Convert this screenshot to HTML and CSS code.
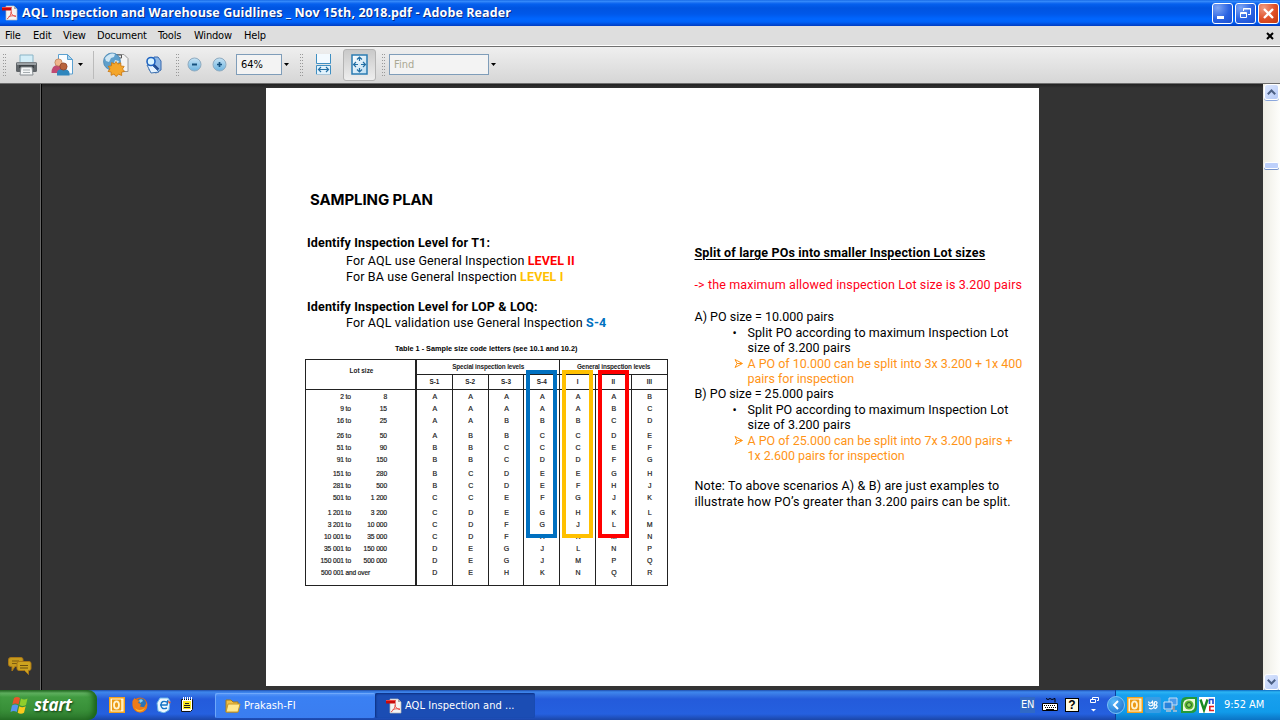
FILE: index.html
```html
<!DOCTYPE html>
<html lang="en">
<head>
<meta charset="utf-8">
<title>AQL Inspection and Warehouse Guidlines _ Nov 15th, 2018.pdf - Adobe Reader</title>
<link rel="stylesheet" href="styles.css">
</head>
<body>
<svg class="defs" width="0" height="0">
  <defs>
    <linearGradient id="blueBall" x1="0" y1="0" x2="0" y2="1"><stop offset="0" stop-color="#c5e2f4"/><stop offset="1" stop-color="#6db4e0"/></linearGradient>
    <linearGradient id="pageFill" x1="0" y1="0" x2="1" y2="1"><stop offset="0" stop-color="#fff"/><stop offset="1" stop-color="#b9dcf2"/></linearGradient>
    <symbol id="pdf" viewBox="0 0 16 16">
      <path d="M4 1h8l3 3v11H4z" fill="#f4f4f4" stroke="#b8b8b8" stroke-width=".7"/>
      <path d="M12 1v3h3z" fill="#aaa"/>
      <path d="M5 14c3-2 4.500-5 4.300-8.500M9 7c.5 2.500 2 4 5 4.600M6.500 11.800c2-1 4.500-1.300 7.500-.8" fill="none" stroke="#e8554e" stroke-width="1"/>
      <path d="M0 2h9.500v3.500H0z" fill="#c90a0a"/><path d="M0 2h9.500v1H0z" fill="#e44"/>
    </symbol>
    <symbol id="outlook" viewBox="0 0 16 16">
      <path d="M0 0h16v16H0z" fill="#f5a21b"/><path d="M1.500 1.500h13v13h-13z" fill="#fff6da"/>
      <path d="M3 2.500h9v11H3z" fill="#eb9a16"/><ellipse cx="7.500" cy="8" rx="2.500" ry="3.600" fill="none" stroke="#fff3cf" stroke-width="1.800"/>
      <path d="M12 3h1.500v10H12z" fill="#ffe19a"/>
    </symbol>
  </defs>
</svg>
<div class="desktop">
  <header class="titlebar">
    <svg class="title-icon" width="16" height="16"><use href="#pdf"/></svg>
    <span class="title">AQL Inspection and Warehouse Guidlines _ Nov 15th, 2018.pdf - Adobe Reader</span>
    <div class="win-buttons">
      <span class="win-btn"><svg width="19" height="19"><path d="M4 12h7v3H4z" fill="#fff"/></svg></span>
      <span class="win-btn"><svg width="19" height="19" fill="none" stroke="#fff"><path d="M7.500 7V4.500h7v6H12M7 5h8" /><path d="M4.500 8.500h6v5h-6zM4 9.500h7"/></svg></span>
      <span class="win-btn close"><svg width="19" height="19"><path d="M5 5l9 9M14 5l-9 9" stroke="#fff" stroke-width="2.300"/></svg></span>
    </div>
  </header>
  <nav class="menubar">
    <span>File</span><span>Edit</span><span>View</span><span>Document</span><span>Tools</span><span>Window</span><span>Help</span>
    <svg class="doc-close" width="8" height="8"><path d="M1 1l6 6M7 1L1 7" stroke="#000" stroke-width="2"/></svg>
  </nav>
  <div class="toolbar">
    <i class="grip"></i>
    <svg width="24" height="24" viewBox="0 0 24 24">
      <path d="M5 2h13v8H5z" fill="#d4eef8" stroke="#8ab4c6"/>
      <rect x="1" y="9" width="21" height="10" rx="1.500" fill="#5f6468"/><path d="M2 9.500h19v2.500H2z" fill="#9aa0a4"/><path d="M4 12h15v3H4z" fill="#3f4448"/>
      <path d="M6 14h11l1 8H5z" fill="#f4f6f7" stroke="#858b8f"/><path d="M8 17h7M8 19.500h7" stroke="#a6adb0"/>
    </svg>
    <svg width="24" height="24" viewBox="0 0 24 24">
      <path d="M7.500 1.500h9l5 5V21h-14z" fill="#f8fcff" stroke="#5aa0d0"/><path d="M16.500 1.500v5h5z" fill="#a9d2ee" stroke="#5aa0d0"/>
      <path d="M.5 20q0-8 6.500-8t6 8z" fill="#c04a72"/><circle cx="7.500" cy="9.500" r="3.600" fill="#f0b58c" stroke="#b67a4c" stroke-width=".7"/>
      <path d="M6 22.500V20q0-4 6-4t6.500 4v2.500z" fill="#2f86bd"/><circle cx="12.500" cy="13.500" r="3.600" fill="#b8643c" stroke="#8a3e22" stroke-width=".7"/>
    </svg>
    <i class="caret"></i>
    <i class="sep"></i>
    <svg width="26" height="25" viewBox="0 0 26 25">
      <path d="M12 2.500h9l4 4v13H12z" fill="#f3f3f3" stroke="#999"/><path d="M11.500 3h7v3h-7z" fill="#eee" stroke="#555"/>
      <circle cx="9" cy="9.500" r="8.500" fill="#5f9fcb" stroke="#4080ae" stroke-width=".7"/><path d="M2 6q5-6 10-4l-1 3-3 1-2 4-3-1zM12 8l4 1-2 4-3-2z" fill="#cfe6f4"/>
      <path d="M13 11l1.800 2.600 3-1.300.1 3.200 3.300.4-1.700 2.600 2.100 2.400-3.100.9.200 3.200-3-1.300L13 26l-1.900-2.500-3 1.300.1-3.200-3.200-.7 2-2.500-1.700-2.600 3.200-.5.100-3.200 2.800 1.200z" transform="translate(0 -1.500)" fill="#f4a62a" stroke="#c8740c" stroke-width=".8"/>
    </svg>
    <svg width="18" height="18" viewBox="0 0 18 18">
      <path d="M9 1h4l3 4v9l-5 3-7-3z" fill="#8db7e4" stroke="#3869ae"/><path d="M2 9l4 8 8-1-7-7z" fill="#e6f3ff" stroke="#3f72b0"/>
      <path d="M8.500 8.500l5 5" stroke="#214c91" stroke-width="2.300"/><circle cx="6" cy="5.500" r="4" fill="#d9f4ff" stroke="#1e62c0" stroke-width="1.600"/>
    </svg>
    <i class="grip"></i>
    <svg width="16" height="16"><circle cx="7.500" cy="7.500" r="6.500" fill="url(#blueBall)" stroke="#8fabc0"/><path d="M5 7.500h5" stroke="#17527f" stroke-width="2"/></svg>
    <svg width="16" height="16"><circle cx="7.500" cy="7.500" r="6.500" fill="url(#blueBall)" stroke="#8fabc0"/><path d="M5 7.500h5M7.500 5v5" stroke="#17527f" stroke-width="1.700"/></svg>
    <span class="field zoom">64%</span>
    <i class="caret"></i>
    <i class="grip"></i>
    <svg width="18" height="22"><path d="M1.500 0v9.500h14V0" fill="#f3faff" stroke="#3f8fc2"/><path d="M1.500 20.500v-9h14v9z" fill="#e1f2fc" stroke="#3f8fc2"/><path d="M1 20.500h15" stroke="#a9c5d8"/><path d="M4 15.500h9M6 13l-2.500 2.500L6 18M11 13l2.500 2.500L11 18" fill="none" stroke="#236fa4" stroke-width="1.200"/></svg>
    <span class="pressed"><svg width="17" height="21"><path d="M1 1h15v19H1z" fill="url(#pageFill)" stroke="#2b7cb3" stroke-width="1.500"/><path d="M8.500 3v4M6 5.500L8.500 3 11 5.500M8.500 18v-4M6 15.500L8.500 18 11 15.500M2.500 10.500H7M5 8l-2.500 2.500L5 13M14.500 10.500H10M12 8l2.500 2.500L12 13" fill="none" stroke="#236fa4" stroke-width="1.200"/></svg></span>
    <i class="grip"></i>
    <span class="field find">Find</span>
    <i class="caret"></i>
  </div>

  <main class="workspace">
    <aside class="sidebar">
      <svg width="24" height="18" viewBox="0 0 24 18"><path d="M3 .5h10q2 0 2 2v5q0 2-2 2H7L4 14V9.500H3q-2.500 0-2.500-2v-5q0-2 2.500-2z" fill="#c69a1d" stroke="#a87616"/><path d="M4 4h7M4 6.500h5" stroke="#7d5d10"/><path d="M11 4.500h10q2 0 2 2v5q0 2-2 2h-.5V17.500l-4-4H11q-2 0-2-2v-5q0-2 2-2z" fill="#cda31f" stroke="#a87616"/><path d="M12 8.500h8M12 11h8" stroke="#6b5010"/></svg>
    </aside>
    <div class="canvas">
      <article class="page">
        <section class="left">
          <h1>SAMPLING PLAN</h1>
          <h2 class="t1">Identify Inspection Level for T1:</h2>
          <p class="l1">For AQL use General Inspection <b class="red">LEVEL II</b></p>
          <p>For BA use General Inspection <b class="yellow">LEVEL I</b></p>
          <h2 class="lop">Identify Inspection Level for LOP &amp; LOQ:</h2>
          <p>For AQL validation use General Inspection <b class="blue">S-4</b></p>
          <div class="caption">Table 1 - Sample size code letters (see 10.1 and 10.2)</div>
          <div class="table">
            <div class="thead">
              <div class="lot-h">Lot size</div>
              <div class="special">Special inspection levels</div>
              <div class="general">General inspection levels</div>
              <div>S-1</div><div>S-2</div><div>S-3</div><div>S-4</div><div>I</div><div>II</div><div>III</div>
            </div>
            <div class="tbody">
              <div class="rules"><i></i><i></i><i></i><i></i><i></i><i></i><i></i><i></i></div>
              <div class="group">
                <div class="row"><span>2 to</span><span>8</span><b>A</b><b>A</b><b>A</b><b>A</b><b>A</b><b>A</b><b>B</b></div>
                <div class="row"><span>9 to</span><span>15</span><b>A</b><b>A</b><b>A</b><b>A</b><b>A</b><b>B</b><b>C</b></div>
                <div class="row"><span>16 to</span><span>25</span><b>A</b><b>A</b><b>B</b><b>B</b><b>B</b><b>C</b><b>D</b></div>
              </div>
              <div class="group">
                <div class="row"><span>26 to</span><span>50</span><b>A</b><b>B</b><b>B</b><b>C</b><b>C</b><b>D</b><b>E</b></div>
                <div class="row"><span>51 to</span><span>90</span><b>B</b><b>B</b><b>C</b><b>C</b><b>C</b><b>E</b><b>F</b></div>
                <div class="row"><span>91 to</span><span>150</span><b>B</b><b>B</b><b>C</b><b>D</b><b>D</b><b>F</b><b>G</b></div>
              </div>
              <div class="group">
                <div class="row"><span>151 to</span><span>280</span><b>B</b><b>C</b><b>D</b><b>E</b><b>E</b><b>G</b><b>H</b></div>
                <div class="row"><span>281 to</span><span>500</span><b>B</b><b>C</b><b>D</b><b>E</b><b>F</b><b>H</b><b>J</b></div>
                <div class="row"><span>501 to</span><span>1 200</span><b>C</b><b>C</b><b>E</b><b>F</b><b>G</b><b>J</b><b>K</b></div>
              </div>
              <div class="group">
                <div class="row"><span>1 201 to</span><span>3 200</span><b>C</b><b>D</b><b>E</b><b>G</b><b>H</b><b>K</b><b>L</b></div>
                <div class="row"><span>3 201 to</span><span>10 000</span><b>C</b><b>D</b><b>F</b><b>G</b><b>J</b><b>L</b><b>M</b></div>
                <div class="row"><span>10 001 to</span><span>35 000</span><b>C</b><b>D</b><b>F</b><b>H</b><b>K</b><b>M</b><b>N</b></div>
                <div class="row"><span>35 001 to</span><span>150 000</span><b>D</b><b>E</b><b>G</b><b>J</b><b>L</b><b>N</b><b>P</b></div>
                <div class="row"><span>150 001 to</span><span>500 000</span><b>D</b><b>E</b><b>G</b><b>J</b><b>M</b><b>P</b><b>Q</b></div>
                <div class="row over"><span>500 001 and over</span><b>D</b><b>E</b><b>H</b><b>K</b><b>N</b><b>Q</b><b>R</b></div>
              </div>
            </div>
            <i class="mark mark-blue"></i><i class="mark mark-yellow"></i><i class="mark mark-red"></i>
          </div>
        </section>
        <section class="right">
          <h2>Split of large POs into smaller Inspection Lot sizes</h2>
          <p class="max">-&gt; the maximum allowed inspection Lot size is 3.200 pairs</p>
          <p class="case">A) PO size = 10.000 pairs</p>
          <p class="item"><i>•</i>Split PO according to maximum Inspection Lot<br>size of 3.200 pairs</p>
          <p class="item orange"><i><svg width="9" height="9"><path d="M1 .5l7.500 4-7.500 4 2-4zM3 4.500h5" fill="none" stroke="#ff9417"/></svg></i>A PO of 10.000 can be split into 3x 3.200 + 1x 400<br>pairs for inspection</p>
          <p>B) PO size = 25.000 pairs</p>
          <p class="item"><i>•</i>Split PO according to maximum Inspection Lot<br>size of 3.200 pairs</p>
          <p class="item orange"><i><svg width="9" height="9"><path d="M1 .5l7.500 4-7.500 4 2-4zM3 4.500h5" fill="none" stroke="#ff9417"/></svg></i>A PO of 25.000 can be split into 7x 3.200 pairs +<br>1x 2.600 pairs for inspection</p>
          <p class="note">Note: To above scenarios A) &amp; B) are just examples to<br>illustrate how PO’s greater than 3.200 pairs can be split.</p>
        </section>
      </article>
    </div>
    <div class="scrollbar">
      <span class="sb-btn"><svg width="9" height="6"><path d="M.8 5.200L4.500 1.500l3.700 3.700" fill="none" stroke="#4d6185" stroke-width="2"/></svg></span>
      <span class="thumb"></span>
      <span class="sb-btn"><svg width="9" height="6"><path d="M.8.8l3.700 3.700L8.200.8" fill="none" stroke="#4d6185" stroke-width="2"/></svg></span>
    </div>
  </main>

  <footer class="taskbar">
    <div class="start">
      <svg width="20" height="18" viewBox="0 0 20 18"><path d="M4 2q3-2 6 0L8.500 8.500q-3-2-6.200 0z" fill="#e8552b"/><path d="M11 2.500q3 2 6.500 0L16 9q-3.500 2-6.500 0z" fill="#8fce2c"/><path d="M2 9.500q3-2 6.200 0L6.700 16q-3-2-6.200 0z" fill="#5795f0"/><path d="M9.200 10.200q3 2 6.500 0L14 16.700q-3 2-6.300 0z" fill="#fbc91d"/></svg>
      <span>start</span>
    </div>
    <div class="quick">
      <svg width="16" height="16"><use href="#outlook"/></svg>
      <svg width="16" height="16"><circle cx="8" cy="8" r="7.500" fill="#e66a10"/><circle cx="9" cy="6.500" r="5" fill="#2874b8"/><path d="M7 3q3-2 4 1l-3 2z" fill="#8ad1ee"/><path d="M.5 4L2.500 1l2 2 3 .5L6 6l3 1-1 2.500 4 .8 3-5q1 10-7 10.200Q-.5 14 .5 4z" fill="#ed7b16"/><path d="M3 11q4 4 10 0-3 5-8 3z" fill="#fbb92c"/></svg>
      <svg width="16" height="16"><path d="M4 1h8l2 3-1 9-5 3-6-2-1-8z" fill="#ecf7ff" stroke="#69b4e6"/><path d="M11 5q-6-2-6 3t6 3M4 8h7l1-5" fill="none" stroke="#1676c6" stroke-width="1.400"/><path d="M12 4l3 1-2 2z" fill="#ec4a22"/></svg>
      <svg width="16" height="16"><path d="M2.500 2.500h11v10l-2 2h-9z" fill="#fff" stroke="#111"/><path d="M4.500 0v3M6.500 0v3M8.500 0v3M10.500 0v3M12.500 0v3" stroke="#fff"/><path d="M4 4h8v8H4z" fill="#ffee22"/><path d="M6 6.500h4M5 8.500h6M5 10.500h6" stroke="#222"/></svg>
    </div>
    <div class="task">
      <svg width="16" height="14"><path d="M1 1h5l2 2h5v10H1z" fill="#efbf45" stroke="#a37a1b"/><path d="M3 5h12l-2 8H1z" fill="#ffe990" stroke="#c59828"/></svg>
      <span>Prakash-FI</span>
    </div>
    <div class="task active"><svg width="16" height="16"><use href="#pdf"/></svg><span>AQL Inspection and ...</span></div>
    <div class="lang">
      <span class="en">EN</span>
      <svg width="16" height="14"><path d="M4 .5l2 1 2-1 2 1 3-1v4" fill="none" stroke="#000"/><path d="M.5 5.500h15v7H.5z" fill="#fff" stroke="#000"/><path d="M2 7.500h12M3 9.500h11" stroke="#000" stroke-dasharray="1 1"/><path d="M4 11.500h8" stroke="#000"/></svg>
      <span class="help"><span>?</span></span>
      <svg class="restore" width="10" height="18"><path d="M2.500 3V1.500h6v3H7M.5 3.500h5v3h-5z" fill="none" stroke="#fff"/><path d="M1 13h5L3.500 15.500z" fill="#fff"/></svg>
    </div>
    <div class="tray">
      <span class="chev"><svg width="8" height="10"><path d="M6 1L2 5l4 4" fill="none" stroke="#fff" stroke-width="2"/></svg></span>
      <svg width="16" height="16"><use href="#outlook"/></svg>
      <svg width="16" height="16"><rect width="16" height="16" rx="2" fill="#3a9de4"/><path d="M3.500 4.500q1 3.500 4 0l.5 3.500q-3.500 2-4.500-1M10 4.500q3.500 0 1 3.500 2.500 1-.5 3.500-3-.5-.5-3.500-1.500-1.500 0-3.500zM4 11q3 2 5-1" fill="none" stroke="#fff" stroke-width="1.200"/></svg>
      <svg width="16" height="16"><path d="M6 1h8v7H6z" fill="#4b9cec" stroke="#c7dcf2"/><path d="M9 9h3v4H9z" fill="#8795a5"/><path d="M1 5h8v7H1z" fill="#2782dc" stroke="#d2e5f7"/><path d="M3 14h5M10 14h4" stroke="#b6c4d4" stroke-width="1.500"/></svg>
      <svg width="16" height="16"><path d="M5 0h11v10q0 6-6 6H0V6q0-6 5-6z" fill="#239a3b"/><path d="M2 14V8Q2 2 8 2h6v6q0 6-6 6z" fill="#eaf7d9"/><circle cx="8" cy="8" r="4.600" fill="#5fb62d"/><circle cx="8" cy="8" r="2.400" fill="#8fd45a" stroke="#205d26"/></svg>
      <svg width="16" height="16"><path d="M0 0h16v16H0z" fill="#fff"/><path d="M1.500 2.500L5 13l3.500-10.500" fill="none" stroke="#178a21" stroke-width="2.400"/><path d="M10.500 7V2.500h3.500V7" fill="none" stroke="#1c48d0" stroke-width="1.600"/><path d="M15 9.500h-4.200v4H15" fill="none" stroke="#e02020" stroke-width="1.600"/></svg>
      <time>9:52 AM</time>
    </div>
  </footer>
</div>
</body>
</html>
```
FILE: styles.css
```css
* { box-sizing: border-box; }
body { margin: 0; overflow: hidden; font: 11px/14px "DejaVu Sans Condensed", "DejaVu Sans", sans-serif; font-stretch: condensed; color: #000; }
h1, h2, p { margin: 0; }
i { font-style: normal; }
svg { display: block; flex: none; }
.defs { position: absolute; }
.desktop { width: 1280px; height: 720px; display: flex; flex-direction: column; background: #333; }

.titlebar { flex: none; height: 26px; display: flex; align-items: center; padding: 0 2px; background: linear-gradient(#0a58dc 0, #3a93ff 1px, #2a7cf5 2px, #0560ee 4px, #0054e1 8px, #0058ea 14px, #0066ff 19px, #0062f8 22px, #0046d0 25px, #003cc0 26px); }
.title { margin-left: 4px; flex: 1; font: bold 12.500px/20px "Open Sans", sans-serif; letter-spacing: .1px; color: #fff; text-shadow: 1px 1px #0a2a80; white-space: nowrap; }
.win-buttons { display: flex; gap: 2px; margin-right: -1px; }
.win-btn { width: 21px; height: 21px; border: 1px solid #fff; border-radius: 3px; background: radial-gradient(circle at 25% 20%, #7ea5f4, #2b63e2 55%, #1a4fd0); }
.close { background: radial-gradient(circle at 25% 20%, #f09a80, #df4f27 55%, #c13a12); }

.menubar { flex: none; height: 21px; display: grid; grid-template-columns: 28px 30px 34px 61px 36px 50px 1fr 14px; padding: 2px 0 0 5px; align-items: start; background: #dedede; border-bottom: 1px solid #707070; box-shadow: inset 0 -1px #fff; line-height: 15px; letter-spacing: -.2px; }
.doc-close { margin-top: 4px; }

.toolbar { flex: none; height: 37px; display: grid; align-items: center; grid-template-columns: 12px 36px 27px 15px 10px 42px 31px 11px 25px 24px 48px 16px 15px 28px 39px 7px 102px 10px; padding: 0 0 1px 3px; background: linear-gradient(#efefef, #d6d6d6); border-bottom: 1px solid #6e6e6e; }
.grip { width: 4px; height: 22px; background: conic-gradient(#999 25%, transparent 0) -1px 0 / 2px 3px; }
.sep { width: 1px; height: 28px; background: #bbb; }
.caret { width: 5px; height: 3px; background: #000; clip-path: polygon(0 0, 100% 0, 50% 100%); }
.field { height: 21px; border: 1px solid #7f9db9; background: #f3f3f3; line-height: 19px; padding-left: 4px; }
.zoom { width: 46px; }
.find { width: 100px; color: #aaa894; }
.pressed { width: 33px; height: 32px; display: flex; align-items: center; justify-content: center; border: 1px solid #b4b4b4; border-radius: 3px; background: linear-gradient(#c9c9c9, #eee); }

.workspace { flex: 1; min-height: 0; display: flex; background: #333; }
.sidebar { width: 42px; border-right: 1px solid #000; box-shadow: inset -1px 0 #666; display: flex; align-items: flex-end; padding: 0 0 15px 8px; }
.canvas { flex: 1; padding: 4px 0 0 224px; background: linear-gradient(#222, #333 4px); }
.page { width: 773px; height: 598px; background: #fff; display: flex; font: 12.500px/16px Roboto, sans-serif; font-stretch: normal; }
.left { width: 402px; margin-left: 39px; padding-top: 102px; white-space: nowrap; }
.left h1 { padding-left: 5px; font: 700 15px/20px Inter, sans-serif; letter-spacing: -.1px; }
.left h2, .left p { padding-left: 2px; font-size: 12.500px; line-height: 16px; letter-spacing: .15px; }
.left p { padding-left: 41px; letter-spacing: .13px; }
.left .t1 { margin-top: 25px; }
.left .l1 { margin-top: 2px; }
.left .lop { margin-top: 14px; }
.red { color: #f00; }
.yellow { color: #ffc000; }
.blue { color: #0070c0; }
.caption { margin-top: 12px; width: 362px; padding-left: 90px; font: bold 7.300px/12px "Liberation Sans", sans-serif; }

.table { position: relative; margin-top: 4px; width: 363px; height: 227px; border: 1px solid #222; font: 7px/12px "Liberation Sans", sans-serif; color: #222; }
.thead { display: grid; grid-template-columns: 111px repeat(6, 35.800px) 1fr; grid-template-rows: 15px 15px; text-align: center; font-weight: bold; font-size: 6.400px; }
.thead > div { border-right: 1px solid #222; border-bottom: 1px solid #222; line-height: 14px; }
.thead > div:nth-child(3), .thead > div:last-child { border-right: 0; }
.thead .lot-h { grid-row: span 2; line-height: 22px; border-right-width: 2px; padding-left: 2px; }
.thead .special, .thead .general { letter-spacing: -.15px; }
.special { grid-column: span 4; }
.general { grid-column: span 3; }
.tbody { position: relative; padding-top: 1px; }
.rules { position: absolute; top: 0; left: 0; right: 0; height: 195px; display: grid; grid-template-columns: 111px repeat(6, 35.800px) 1fr; }
.rules i { border-right: 1px solid #222; }
.rules i:first-child { border-right-width: 2px; }
.rules i:last-child { border: 0; }
.group { margin-bottom: 2.500px; position: relative; }
.row { display: grid; grid-template-columns: 45px 36px 30px repeat(7, 35.800px); height: 12px; text-align: right; -webkit-text-stroke: .2px #222; }
.row span { font-size: 6.700px; letter-spacing: -.1px; }
.row b { text-align: center; font-weight: normal; }
.row b:first-of-type { grid-column: 4; }
.row.over span { grid-column: 1 / span 3; text-align: left; padding-left: 15px; font-size: 6.500px; }
.mark { position: absolute; top: 10px; width: 31px; height: 168px; border: 4px solid; }
.mark-blue { left: 220px; border-color: #0070c0; }
.mark-yellow { left: 256px; border-color: #ffc000; }
.mark-red { left: 292px; border-color: #f00; }

.right { margin-left: -12.500px; padding-top: 157px; font-size: 12.500px; line-height: 15.400px; white-space: nowrap; }
.right h2 { font-size: 12.500px; line-height: 16px; letter-spacing: .15px; text-decoration: underline; text-underline-offset: 2px; }
.max { margin-top: 15.500px; color: #ff0018; letter-spacing: .12px; }
.case { margin-top: 17.500px; }
.item { padding-left: 53px; letter-spacing: .07px; }
.item i { float: left; width: 15px; margin-left: -15px; }
.item svg { margin: 3px 0 0 1px; }
.orange { color: #ff9417; letter-spacing: -.03px; }
.note { margin-top: 15px; letter-spacing: .14px; }

.scrollbar { width: 17px; display: flex; flex-direction: column; align-items: center; background: linear-gradient(90deg, #eeede5, #fefefb); }
.sb-btn { width: 15px; height: 16px; display: flex; align-items: center; justify-content: center; border: 1px solid #fff; border-radius: 3px; background: linear-gradient(135deg, #dce7ff, #b5c9f5); box-shadow: 0 1px #8ba7dc; }
.thumb { width: 15px; height: 7px; margin: 62px 0 auto; border: 1px solid #fff; border-radius: 2px; background: #bdd0fb; box-shadow: 0 1px #7895cc; }

.taskbar { flex: none; height: 30px; display: flex; align-items: stretch; color: #fff; background: linear-gradient(#1f4ead 0, #3d86ed 2px, #3a7be6 4px, #245bdb 9px, #2560df 24px, #1b46a8 30px); }
.start { width: 97px; display: flex; align-items: center; gap: 4px; padding-left: 10px; border-radius: 0 9px 9px 0; background: linear-gradient(#286a28 0, #65b565 3px, #419b41 7px, #388f38 20px, #2b742b 30px); box-shadow: inset -4px 0 5px #1c651c; }
.start span { font: italic bold 17px/26px "Open Sans", sans-serif; text-shadow: 1px 1px 2px #123f12; letter-spacing: -.3px; }
.quick { display: flex; align-items: center; gap: 7.300px; width: 118px; padding-left: 12px; }
.task { width: 160px; height: 25px; margin-top: 3px; display: flex; align-items: center; gap: 3px; padding-left: 10px; border-radius: 2px; background: linear-gradient(#5b9bf8, #3a80f3 4px, #3a7df0); box-shadow: inset 1px 1px #6ea8fb; letter-spacing: .05px; }
.active { background: #1b4db4; box-shadow: inset 1px 1px 2px #0b2f80; padding-left: 11px; }
.lang { margin-left: auto; display: flex; align-items: center; gap: 7px; width: 95px; }
.en { width: 15px; height: 16px; line-height: 16px; background: #3069c5; text-align: center; white-space: nowrap; letter-spacing: -.3px; }
.help { width: 14px; height: 14px; background: #fffbe0; border: 1px solid #000; color: #000; font: bold 12px/12px "Liberation Sans", sans-serif; text-align: center; }
.restore { margin-left: 4px; }
.tray { width: 165px; display: flex; align-items: center; gap: 2px; background: linear-gradient(#0d6cc4 0, #2cb5f4 2px, #18a0ee 5px, #119bea 22px, #0b73c4 30px); border-left: 1px solid #0c3f9a; }
.chev { width: 18px; height: 18px; margin-left: -9px; border-radius: 50%; border: 1px solid #7cc4f5; background: radial-gradient(circle at 35% 30%, #57b7fa, #1668c8); display: flex; align-items: center; justify-content: center; }
.tray time { margin-left: 7px; white-space: nowrap; letter-spacing: -.05px; }
```
